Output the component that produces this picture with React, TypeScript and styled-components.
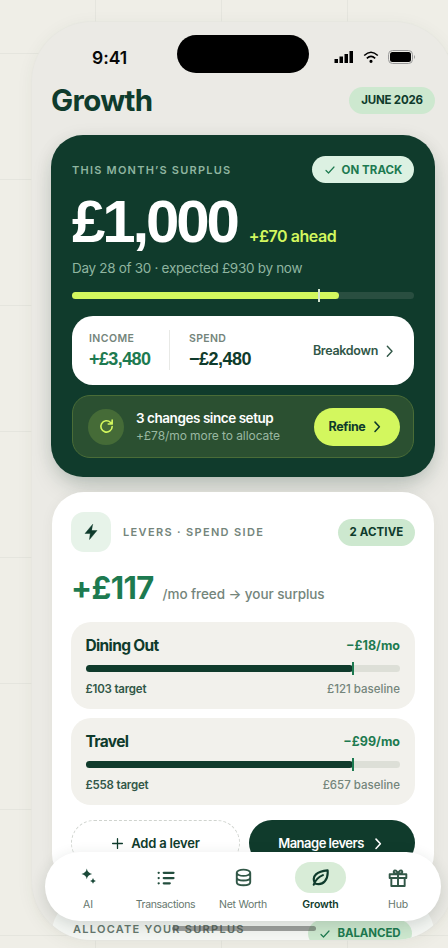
import React from "react";
import styled, { createGlobalStyle } from "styled-components";

const Global = createGlobalStyle`
  *{box-sizing:border-box}
  html,body{margin:0;padding:0;overflow:hidden}
  body{font-family:Inter,"Liberation Sans",sans-serif;color:#0f3b2c;-webkit-font-smoothing:antialiased}
  h1{margin:0}
  button{font-family:inherit;border:0;padding:0;color:inherit;background:none}
`;
const Canvas = styled.div`
  width:448px;height:948px;overflow:hidden;position:relative;
  padding:22px 0 0 32px;
  background:
    linear-gradient(90deg,#e5e5de 1px,transparent 1px) 95px 0/126px 100%,
    linear-gradient(#e5e5de 1px,transparent 1px) 0 53px/100% 126px,
    #efeee7;
`;
const Phone = styled.main`
  width:422px;height:918px;border-radius:60px;overflow:hidden;background:#ebeae5;
  padding:0 19px;
  box-shadow:0 0 0 1px rgba(230,230,223,.7),0 3px 18px rgba(50,60,35,.06);
`;
const Status = styled.header`
  height:56px;display:grid;grid-template-columns:126px 132px 1fr;align-items:start;
`;
const Clock = styled.time`
  font-size:17.5px;font-weight:600;color:#080808;line-height:22px;padding:25px 0 0 41px;letter-spacing:-.05px;
`;
const Island = styled.div`height:38px;border-radius:20px;background:#000;margin-top:13px;`;
const Signals = styled.div`display:flex;align-items:center;padding:28px 0 0 25px;gap:9px;`;
const TitleRow = styled.div`height:57px;display:flex;align-items:flex-start;justify-content:space-between;`;
const T = styled.span<{ $s: number; $w?: number; $c?: string; $l?: number; $h?: number; $num?: boolean }>`
  display:block;white-space:nowrap;font-size:${p => p.$s}px;font-weight:${p => p.$w ?? 600};
  color:${p => p.$c ?? "#0f3b2c"};letter-spacing:${p => p.$l ?? 0}px;line-height:${p => p.$h ?? 18}px;
  ${p => p.$num ? 'font-family:"Liberation Sans",Arial,sans-serif;' : ""}
`;
const Pill = styled.div<{ $w: number; $bg?: string }>`
  width:${p => p.$w}px;height:27px;border-radius:14px;background:${p => p.$bg ?? "#cde8cf"};
  display:flex;align-items:center;justify-content:center;gap:6px;flex:none;
`;
const Hero = styled.section`
  height:342px;border-radius:32px;background:#103b2c;padding:21px 21px 0;
  box-shadow:0 12px 24px -6px rgba(20,50,38,.25),0 2px 18px rgba(20,50,38,.07);
`;
const Row = styled.div<{ $h?: number; $a?: string }>`
  display:flex;height:${p => p.$h ? p.$h + "px" : "auto"};align-items:${p => p.$a ?? "center"};
  justify-content:space-between;
`;
const Amount = styled.div<{ $h: number; $g: number }>`
  display:flex;align-items:baseline;height:${p => p.$h}px;gap:${p => p.$g}px;
`;
const Track = styled.div<{ $bg: string }>`height:7px;border-radius:4px;background:${p => p.$bg};position:relative;`;
const Fill = styled.div<{ $w: number; $bg: string }>`width:${p => p.$w}%;height:7px;border-radius:4px;background:${p => p.$bg};`;
const Tick = styled.i<{ $x: number; $bg: string }>`
  position:absolute;left:${p => p.$x}%;top:-3px;width:2px;height:13px;background:${p => p.$bg};
`;
const Flow = styled.div`
  margin-top:17px;height:69px;border-radius:21px;background:#fff;padding:14px 16px 0 17px;
  display:grid;grid-template-columns:80px 20px 1fr auto;
`;
const Rule = styled.div`width:1px;height:40px;background:#e8e9e6;`;
const Link = styled.button`display:flex;gap:4px;align-items:center;height:41px;`;
const Notice = styled.div`
  margin-top:10px;height:63px;border:1px solid #4a6c37;border-radius:18px;background:#2b5031;
  display:grid;grid-template-columns:48px 1fr 86px;align-items:center;padding:0 13px 0 15px;
`;
const Round = styled.div`width:36px;height:36px;border-radius:50%;background:#456b37;display:grid;place-items:center;`;
const Refine = styled.button`
  height:38px;border-radius:19px;background:#d3f75e;display:flex;align-items:center;justify-content:center;gap:5px;
`;
const Levers = styled.section`
  margin:15px 0 0 1px;width:382px;height:394px;border-radius:32px;background:#fff;padding:20px 19px 0;
  box-shadow:0 2px 14px rgba(50,60,40,.05);
`;
const Bolt = styled.div`width:40px;height:40px;border-radius:13px;background:#e7f3e9;display:grid;place-items:center;`;
const Group = styled.div`display:flex;align-items:center;gap:12px;`;
const Lever = styled.article`height:87px;border-radius:20px;background:#f2f1ec;padding:14px 15px 0 14.5px;margin-bottom:9px;`;
const LeverHead = styled(Row)`margin-bottom:9px;`;
const Actions = styled.div`display:grid;grid-template-columns:169px 166px;gap:9px;margin-top:15px;`;
const Action = styled.button<{ $dark?: boolean }>`
  height:46px;border-radius:23px;display:flex;align-items:center;justify-content:center;gap:7px;
  ${p => p.$dark ? "background:#103b2c;" : "border:1.5px dashed #cfd3ce;"}
`;
const Next = styled.section`
  margin:14px 0 0 1px;width:382px;height:80px;border-radius:32px;background:#f5f7f4;padding:20px 22px 0 21px;
`;
const NextHead = styled.div`display:flex;justify-content:space-between;align-items:flex-start;height:27px;`;
const Dock = styled.nav`
  position:absolute;left:45px;top:852px;width:396px;height:69px;border-radius:35px;background:#fff;
  box-shadow:0 5px 16px rgba(30,50,40,.16);
  display:grid;grid-template-columns:repeat(5,77.5px);justify-content:center;padding-top:10px;
`;
const Tab = styled.button`display:flex;flex-direction:column;align-items:center;`;
const TabIcon = styled.span<{ $on?: boolean }>`
  width:51px;height:31px;border-radius:16px;background:${p => p.$on ? "#d8ecd7" : "transparent"};
  display:grid;place-items:center;margin-bottom:4px;
`;
const HomeBar = styled.div`position:absolute;left:172px;top:926px;width:144px;height:5px;border-radius:3px;background:rgba(70,72,70,.5);`;

const S = ({ d, s = 18, c = "#0f3b2c", w = 2, fill = "none" }: { d: string; s?: number; c?: string; w?: number; fill?: string }) => (
  <svg width={s} height={s} viewBox="0 0 24 24" fill={fill} stroke={c} strokeWidth={w} strokeLinecap="round" strokeLinejoin="round"><path d={d} /></svg>
);
const CHEV = "M8 5l7 7.5L8 20";
const CHECK = "M4 13l5 5L20 6";

const LeverCard = ({ name, save, target, base }: Record<string, string>) => (
  <Lever>
    <LeverHead $h={20}><T $s={15.5} $w={700} $l={-0.65}>{name}</T><T $s={12.5} $w={700} $l={0} $c="#1d7a50">{save}</T></LeverHead>
    <Track $bg="#dddfd7"><Fill $w={85} $bg="#103b2c" /><Tick $x={84.7} $bg="#1d7a50" /></Track>
    <Row $h={34}><T $s={11.5} $w={600} $c="#315747" $l={-0.2}>{target}</T><T $s={11.5} $w={500} $c="#74857b">{base}</T></Row>
  </Lever>
);

const tabs = [
  { name: "AI", icon: <svg width="22" height="22" viewBox="0 0 22 22" fill="#1b4a3a"><path d="M9.800 1.600q.7 4.500 5.300 5.300-4.600.8-5.300 5.300-.7-4.500-5.300-5.300 4.600-.8 5.300-5.300zM16 11q.4 2.400 2.900 2.900-2.500.5-2.900 2.900-.4-2.400-2.900-2.900 2.500-.5 2.900-2.900z" /></svg> },
  { name: "Transactions", icon: <S d="M9 5h13M9 12h13M9 19h8M2.2 5h.1M2.2 12h.1M2.2 19h.1" s={18} w={3} c="#234e3e" /> },
  { name: "Net Worth", icon: <S d="M3.5 6a8.5 4 0 1 0 17 0a8.5 4 0 1 0-17 0v12c0 5 17 5 17 0V6M3.5 12c0 5 17 5 17 0" s={19} c="#315747" w={2.4} /> },
  { name: "Growth", icon: <S d="M5 19.5C0 10 8 4 21 3c1 11-5 20-16 16.500zM3.500 21C6 14 10 11 15 9" s={19} w={2.7} /> },
  { name: "Hub", icon: <S d="M2 7.500h20V12H2zM4 12v9.500h16V12M12 7.500v14M12 7C9 7 6 6 7 4s4-1 5 3c1-4 4-5 5-3s-2 3-5 3" s={20} c="#315747" w={2.3} /> },
];

export default function App() {
  return (
    <><Global /><Canvas><Phone>
      <Status><Clock>9:41</Clock><Island />
        <Signals>
          <svg width="20" height="14" viewBox="0 0 20 14"><path d="M.5 9h3.500v4H.5zM5.500 6.500H9V13H5.500zM10.500 4H14v9h-3.500zM15.500 1H19v12h-3.500z" /></svg>
          <svg width="16" height="14" viewBox="0 0 16 14" fill="none" stroke="#000" strokeWidth="1.6"><path d="M1.200 5.500Q8-1 14.800 5.500M3.800 8.300Q8 4.400 12.200 8.300" /><circle cx="8" cy="11.300" r=".8" fill="#000" /></svg>
          <svg width="28" height="14" viewBox="0 0 28 14"><rect x=".5" y=".5" width="24" height="13" rx="4" fill="none" stroke="#999" /><rect x="2" y="2" width="21" height="10" rx="2.500" /><path d="M26 5q2 2 0 4z" fill="#999" /></svg>
        </Signals>
      </Status>
      <TitleRow><T as="h1" $s={29.5} $w={700} $l={-0.65} $h={45}>Growth</T><Row $h={44}><Pill $w={86}><T $s={11.5} $w={700} $l={-0.2}>JUNE 2026</T></Pill></Row></TitleRow>
      <Hero>
        <Row $h={27}><T $s={11} $c="#8fb5a0" $l={1.22}>THIS MONTH’S SURPLUS</T><Pill $w={102} $bg="#dcf1e2"><S d={CHECK} s={12} c="#1d7a50" w={2.4} /><T $s={11.5} $w={700} $c="#1d7a50" $l={0.05}>ON TRACK</T></Pill></Row>
        <Amount $h={74} $g={12}><T $s={60} $w={700} $c="#fff" $l={-3.15} $h={78} $num>£1,000</T><T $s={16} $c="#d3f75e" $l={-0.45}>+£70 ahead</T></Amount>
        <Row $h={35} $a="flex-start"><T $s={13.5} $w={400} $c="#8fb5a0" $l={-0.3} $h={22}>Day 28 of 30 · expected £930 by now</T></Row>
        <Track $bg="#294e40"><Fill $w={78} $bg="#d3f75e" /><Tick $x={72} $bg="#d5e5cf" /></Track>
        <Flow>
          <div><T $s={10.5} $w={600} $c="#74857b" $l={0.45} $h={17}>INCOME</T><T $s={18} $w={700} $c="#1d7a50" $l={-0.6} $h={25} $num>+£3,480</T></div><Rule />
          <div><T $s={10.5} $w={600} $c="#74857b" $l={0.35} $h={17}>SPEND</T><T $s={18} $w={700} $l={-0.5} $h={25} $num>−£2,480</T></div>
          <Link><T $s={12.5} $c="#315747" $l={-0.3}>Breakdown</T><S d={CHEV} s={16} c="#315747" w={2.1} /></Link>
        </Flow>
        <Notice><Round><S d="M20 12a8 8 0 1 1-2.3-5.7L20 8.500M20 3v5.500h-5.500" s={17} c="#d3f75e" w={2.3} /></Round>
          <div><T $s={13.5} $c="#fff" $h={18} $l={-0.45}>3 changes since setup</T><T $s={12} $w={400} $c="#9ab8a1" $h={17} $l={-0.08}>+£78/mo more to allocate</T></div>
          <Refine><T $s={12.5} $w={700} $l={-0.4}>Refine</T><S d={CHEV} s={15} w={2.5} /></Refine></Notice>
      </Hero>
      <Levers>
        <Row $h={40}><Group><Bolt><S d="M14 2L4 14h7l-1 8 10-12h-7z" s={18} fill="#0f3b2c" w={0.6} /></Bolt><T $s={11} $w={600} $c="#74857b" $l={1.34}>LEVERS · SPEND SIDE</T></Group><Pill $w={77}><T $s={11.5} $w={700} $l={0.1}>2 ACTIVE</T></Pill></Row>
        <Amount $h={70} $g={9}><T $s={31} $w={700} $c="#1d7a50" $l={-0.6} $h={71}>+£117</T><T $s={13.5} $w={500} $c="#74857b" $l={-0.07}>/mo freed → your surplus</T></Amount>
        <LeverCard name="Dining Out" save="−£18/mo" target="£103 target" base="£121 baseline" />
        <LeverCard name="Travel" save="−£99/mo" target="£558 target" base="£657 baseline" />
        <Actions><Action><S d="M12 3v18M3 12h18" s={13} w={2.4} /><T $s={13} $l={-0.2}>Add a lever</T></Action><Action $dark><T $s={13} $c="#fff" $l={-0.5}>Manage levers</T><S d={CHEV} s={15} c="#fff" w={2.5} /></Action></Actions>
      </Levers>
      <Next><NextHead><T $s={11} $c="#66776e" $l={1.27}>ALLOCATE YOUR SURPLUS</T><Pill $w={104}><S d={CHECK} s={12} c="#1d7a50" w={2.4} /><T $s={11.5} $h={13} $w={700} $c="#1d7a50" $l={-0.1}>BALANCED</T></Pill></NextHead></Next>
    </Phone><HomeBar />
    <Dock>{tabs.map((t, i) => <Tab key={t.name}><TabIcon $on={i === 3}>{t.icon}</TabIcon><T $s={10.5} $w={i === 3 ? 600 : 400} $c={i === 3 ? "#0f3b2c" : "#66776e"} $h={16} $l={i === 1 ? -0.35 : i === 2 ? -0.25 : -0.1}>{t.name}</T></Tab>)}</Dock>
    </Canvas></>
  );
}
